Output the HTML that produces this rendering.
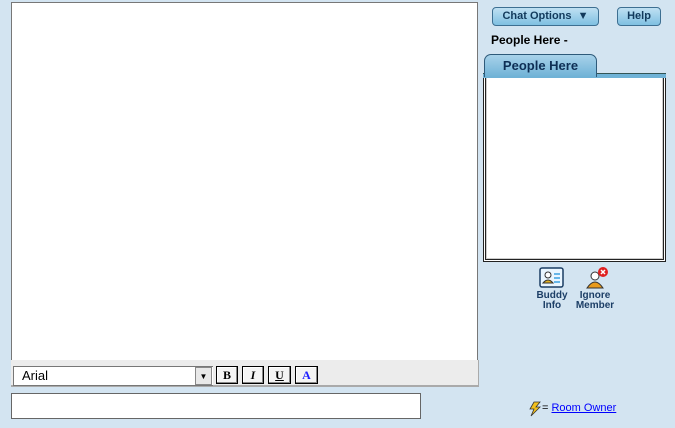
<!DOCTYPE html><html><head><style>
body{margin:0;width:675px;height:428px;background:#d3e4f1;position:relative;overflow:hidden;font-family:"Liberation Sans",sans-serif}
.a{position:absolute;box-sizing:border-box}
.btn{background:linear-gradient(#bfe0f3,#7fc0e2);border:1px solid #3d6f92;border-radius:4px;color:#123a5c;font-size:11px;font-weight:bold;text-align:center;line-height:17px}
.fb{background:#f4f4f4;border:1px solid #000;box-shadow:inset -1px -1px #888,inset 1px 1px #fff;font-family:"Liberation Serif",serif;font-weight:bold;font-size:12px;text-align:center;line-height:16px}
.lbl{color:#1c3e66;font-size:10px;font-weight:bold;text-align:center;line-height:10px}
</style></head><body>
<div class="a" style="left:11px;top:2px;width:467px;height:359px;background:#fff;border:1px solid #777"></div>
<div class="a" style="left:11px;top:360px;width:468px;height:27px;background:#ececec;border-bottom:2px solid #aaa;border-right:1px solid #aaa"></div>
<div class="a" style="left:13px;top:366px;width:200px;height:20px;background:#fff;border:1px solid #777;border-right:none;font-size:13px;line-height:18px;padding-left:8px">Arial</div>
<div class="a" style="left:195px;top:367px;width:17px;height:18px;background:#e8e8e8;border:1px solid #888;font-size:8px;text-align:center;line-height:18px">▼</div>
<div class="a fb" style="left:216px;top:366px;width:22px;height:18px">B</div>
<div class="a fb" style="left:242px;top:366px;width:22px;height:18px;font-style:italic">I</div>
<div class="a fb" style="left:268px;top:366px;width:23px;height:18px;text-decoration:underline">U</div>
<div class="a fb" style="left:295px;top:366px;width:23px;height:18px;color:#2020ff">A</div>
<div class="a" style="left:11px;top:393px;width:410px;height:26px;background:#fff;border:1px solid #666"></div>
<div class="a btn" style="left:492px;top:7px;width:107px;height:19px">Chat Options &nbsp;<span style="font-size:11px">▼</span></div>
<div class="a btn" style="left:617px;top:7px;width:44px;height:19px">Help</div>
<div class="a" style="left:491px;top:33px;font-size:12px;font-weight:bold">People Here -</div>
<div class="a" style="left:483px;top:74px;width:183px;height:188px;background:#fff;border:3px double #222;box-shadow:inset 0 0 0 1px #ccc"></div>
<div class="a" style="left:483px;top:73px;width:183px;height:5px;background:#6fb2d6;border-top:1px solid #355"></div>
<div class="a" style="left:484px;top:54px;width:113px;height:23px;background:linear-gradient(#a8d2ea,#6fb2d6);border:1px solid #2e5a7a;border-bottom:none;border-radius:7px 7px 0 0;color:#0e2f55;font-size:13px;font-weight:bold;text-align:center;line-height:22px">People Here</div>
<svg class="a" style="left:539px;top:267px" width="26" height="22"><rect x="1" y="1" width="23" height="19" rx="2" fill="#eaf6ff" stroke="#1b3d63" stroke-width="1.5"/><circle cx="9" cy="8" r="3" fill="#fff" stroke="#333"/><path d="M4 16 Q9 10 14 16Z" fill="#e3b021" stroke="#333"/><path d="M15 7h6M15 11h6M15 15h6" stroke="#3aa0e0" stroke-width="1.5"/></svg>
<svg class="a" style="left:584px;top:266px" width="26" height="24"><circle cx="11" cy="10" r="4" fill="#fff" stroke="#333"/><path d="M3 22 Q11 10 19 22Z" fill="#e89a1c" stroke="#333"/><circle cx="19" cy="6" r="5" fill="#e02020"/><path d="M17 4l4 4M21 4l-4 4" stroke="#fff" stroke-width="1.5"/></svg>
<div class="a lbl" style="left:532px;top:291px;width:40px">Buddy<br>Info</div>
<div class="a lbl" style="left:574px;top:291px;width:42px">Ignore<br>Member</div>
<svg class="a" style="left:528px;top:401px" width="13" height="16"><path d="M6 1h6L8 6h4L3 15l3-7H2z" fill="#f2c01c" stroke="#333" stroke-width="0.8"/></svg>
<div class="a" style="left:542px;top:402px;font-size:11px;color:#000">= <span style="color:#00f;text-decoration:underline">Room Owner</span></div>
</body></html>
